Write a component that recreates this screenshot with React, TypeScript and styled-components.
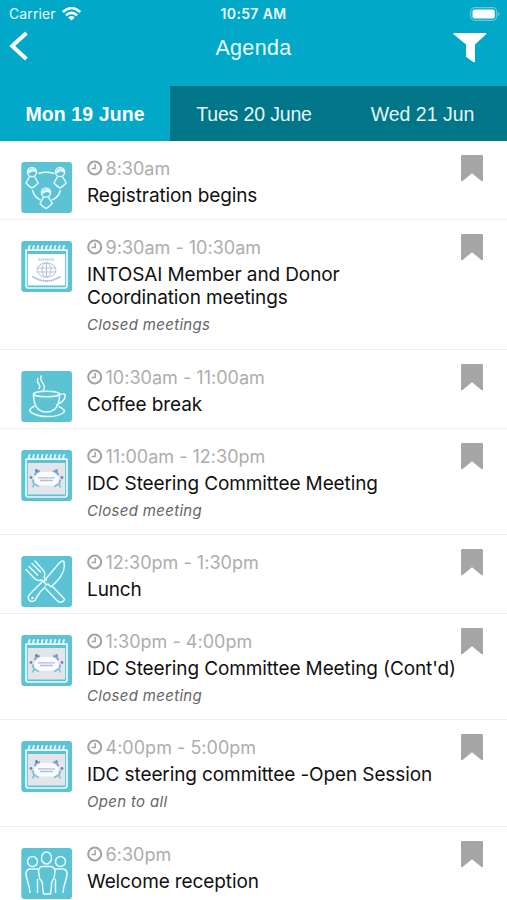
import React from 'react';
import styled, { createGlobalStyle } from 'styled-components';

const Global = createGlobalStyle`
  * { box-sizing: border-box; }
  body { margin: 0; background: #fff; overflow: hidden; }
`;

const Screen = styled.main`
  width: 507px;
  height: 900px;
  overflow: hidden;
  background: #fff;
  font-family: Inter, "Liberation Sans", sans-serif;
`;

const Header = styled.header`
  background: #02a8c7;
  color: #e9fbff;
`;

const StatusBar = styled.div`
  display: grid;
  grid-template-columns: 1fr auto 1fr;
  align-items: center;
  height: 28px;
  padding: 0 7px;
  font-size: 14px;
  line-height: 28px;
`;

const Carrier = styled.div`
  display: flex;
  align-items: center;
  gap: 6px;
  padding-left: 2px;
  letter-spacing: 0.1px;
`;

const Clock = styled.div`
  font-weight: 600;
  font-size: 14px;
  letter-spacing: 0.35px;
`;

const Battery = styled.div`
  display: flex;
  justify-content: flex-end;
`;

const NavBar = styled.div`
  display: grid;
  grid-template-columns: 1fr auto 1fr;
  height: 58px;
  padding: 0 9px;
  font: 21.5px/40px "Liberation Sans", sans-serif;
`;

const IconButton = styled.button<{ $end?: boolean }>`
  display: flex;
  align-items: flex-start;
  justify-self: ${(p) => (p.$end ? 'end' : 'start')};
  padding: 0 ${(p) => (p.$end ? 11 : 0)}px 0 0;
  border: 0;
  background: none;
  color: #fff;
`;

const Title = styled.h1`
  margin: 0;
  font: inherit;
  letter-spacing: 0.35px;
`;

const Tabs = styled.nav`
  display: grid;
  grid-template-columns: 170px 1fr 169px;
  height: 55px;
`;

const Tab = styled.button<{ $active?: boolean; $spacing?: number }>`
  height: 55px;
  border: 0;
  padding: 2px 0 0;
  background: ${(p) => (p.$active ? '#02a8c7' : '#007688')};
  color: ${(p) => (p.$active ? '#fff' : '#e4f6f8')};
  font: ${(p) => (p.$active ? 700 : 400)} 19.5px/53px "Liberation Sans", sans-serif;
  letter-spacing: ${(p) => p.$spacing ?? 0}px;
  white-space: nowrap;
`;

const List = styled.ul`
  margin: 0;
  padding: 0;
  list-style: none;
`;

const Row = styled.li<{ $height: number }>`
  display: grid;
  grid-template-columns: 66px 1fr;
  height: ${(p) => p.$height}px;
  padding: 14px 0 0 21px;
  border-bottom: 1px solid #efefef;
`;

const Thumb = styled.div`
  padding-top: 7px;
  height: 58px;
`;

const Details = styled.div`
  min-width: 0;
`;

const TimeLine = styled.div`
  display: flex;
  justify-content: space-between;
  height: 29px;
  padding-right: 24px;
`;

const Time = styled.div`
  display: flex;
  align-items: center;
  gap: 2.5px;
  height: 27px;
  color: #adadad;
  font-size: 18px;
  letter-spacing: 0.02px;
  white-space: nowrap;

  svg {
    margin-bottom: 1px;
  }
`;

const Name = styled.div`
  color: #111;
  font-size: 19px;
  line-height: 23px;
  letter-spacing: -0.11px;
  white-space: pre-line;
`;

const Note = styled.div`
  margin-top: 5px;
  color: #666;
  font-size: 15px;
  font-style: italic;
  line-height: 21px;
  letter-spacing: 0.32px;
`;

const WifiIcon = () => (
  <svg width="19" height="14" viewBox="0 0 19 14" fill="none" stroke="#f2fdff" strokeWidth="2.5">
    <path d="M.8 5Q9.5-3 18.2 5M3.9 8.3Q9.5 3.4 15.1 8.3" />
    <path d="M9.5 13.6 6.2 10.4Q9.5 7.8 12.8 10.4Z" fill="#fff" stroke="none" />
  </svg>
);

const BatteryIcon = () => (
  <svg width="30" height="14" viewBox="0 0 30 14">
    <rect x=".7" y=".7" width="26" height="12.6" rx="4" fill="none" stroke="#65cadd" strokeWidth="1.2" />
    <rect x="2.5" y="2.5" width="22.3" height="9" rx="2" fill="#fff" />
    <path d="M28 5v4Q29.6 8.4 29.6 7T28 5" fill="#65cadd" />
  </svg>
);

const BackIcon = () => (
  <svg width="20" height="34" viewBox="0 0 20 34" fill="none" stroke="#fff" strokeWidth="4">
    <path d="M17.4 5 3.2 18 17.4 31" />
  </svg>
);

const FilterIcon = () => (
  <svg width="34" height="36" viewBox="0 0 34 36" fill="#fff">
    <path d="M.8 5h32q1 .5 0 1.5L22 16.5v17.2q-.5 1-1.5.5L13 28.8V16.5L.8 6.5Q0 5.5.8 5Z" />
  </svg>
);

const ClockIcon = () => (
  <svg width="16" height="16" viewBox="0 0 16 16" fill="none" stroke="#a4a4a4">
    <circle cx="7.7" cy="8" r="6.5" strokeWidth="2.1" />
    <path d="M8.2 4v4.600H4.500" strokeWidth="1.5" />
  </svg>
);

const BookmarkIcon = () => (
  <svg width="22" height="27" viewBox="0 0 22 27" fill="#a6a6a6">
    <path d="M1.2 0h19.6Q22 0 22 1.2v24.3q-.4 1.3-1.6.5L11 18.2 1.6 26q-1.2.8-1.6-.5V1.2Q0 0 1.2 0Z" />
  </svg>
);

type IconKind = 'network' | 'globe' | 'coffee' | 'badge' | 'lunch' | 'people';

const NetworkArt = () => (
  <g strokeWidth="1.4">
    <path d="M17.500 11.500Q25 9 33 11.500M11.500 28q1.500 7 8 10M39.500 28Q38 35 31 38" />
    {[[11, 5.5], [39, 5.5], [25, 26]].map(([x, y]) => (
      <g key={x} transform={`translate(${x} ${y})`}>
        <circle cx="0" cy="4.5" r="4.600" />
        <path d="M-4 5Q-1-1 4 3.500M-3.500 5.500Q1 1.500 4 4.500M-2.400 9-6 15.500Q-3 19 0 20.500 3 19 6.200 15.500L2.500 9" />
      </g>
    ))}
  </g>
);

const CoffeeArt = () => (
  <g strokeWidth="1.5">
    <ellipse cx="25.5" cy="23" rx="13" ry="2.8" />
    <path d="M12.5 23q0 18 13 18t13-18M38 24q7-3 6 2t-9 8M13.5 35q-8 4-2.5 7 6 3.5 16 3.5t15-3.5q4-3-4.5-6.5" />
    <path d="M17 7q-1.500 3 .8 6t-.5 5M20.500 4.500q-2 3 1.200 7.500t.3 8" />
  </g>
);

const LunchArt = () => (
  <g strokeWidth="1.5" strokeLinecap="round" strokeLinejoin="round">
    <path d="m5 13.500 9 9.500q3.500 2.500 7 1l2 2M14 5l8 9q3 4 1 7.500l2.500 2.500M8 10.500l8.500 8.500M11 7.500l8.500 8.500" />
    <path d="M21 26 9 38q-3 3-.8 6t6 0q2-4 5-8l5-5" />
    <path d="M23 25 37 8.500q4-4.500 6-3 2 9-6 18.500l-7 7-3-3-2 1-2-4M25 33l11 11.500q2.500 2.500 5 1.500t2.500-3L31.500 30.500" />
    <circle cx="11.500" cy="42" r=".5" />
  </g>
);

const PeopleArt = () => (
  <g strokeWidth="1.5">
    <circle cx="11.5" cy="13.5" r="5" />
    <circle cx="39.5" cy="13.5" r="5" />
    <ellipse cx="25.5" cy="10" rx="5" ry="6" />
    <path d="M17 21H8.500q-4 1-3.500 6l2 8q1.500 4 2 10M34 21h8.500q4 1 3.500 6l-2 8q-1.500 4-2 10M16.500 31v14M34.500 31v14" />
    <path d="M21 18.500h9q4 1 4 5l-1 7q-3 3-2.500 8l-1 7.500h-7l-1-7.500q.5-5-3-8l-1-7q0-4 3.500-5Z" />
  </g>
);

const CalendarFrame = ({ fill }: { fill: string }) => (
  <g>
    <path d="M5 9V44.500Q5 47 7.500 47h36q2.500 0 2.500-2.500V9" strokeWidth="1.700" />
    <path d="M4.500 9.200h42" strokeWidth="1.700" />
    <rect x="6.800" y="13" width="37.400" height="31.500" fill={fill} stroke="none" />
    {Array.from({ length: 9 }, (_, i) => (
      <path key={i} d={`M${8 + i * 4.300} 9V6.300q0-1.300 1.400-1.300`} strokeWidth="1.800" />
    ))}
  </g>
);

const GlobeArt = () => (
  <g>
    <CalendarFrame fill="#fff" />
    <g stroke="#b3c1df" strokeWidth="1">
      <ellipse cx="25.500" cy="29" rx="9.500" ry="7.200" />
      <ellipse cx="25.500" cy="29" rx="4.500" ry="7.200" />
      <path d="M16.500 27h18M16.500 31h18M25.500 22v14" />
      <path d="M11.500 35.500q14 9 28 0" stroke="#a9b6e3" strokeWidth="1.800" strokeDasharray="1.500 .4" />
      <path d="M17.500 18.500h16" stroke="#bccbe0" strokeWidth="2.400" strokeDasharray="1.300 .7" />
    </g>
  </g>
);

const BadgeArt = () => (
  <g>
    <CalendarFrame fill="#e4e5e8" />
    <g fill="none" strokeWidth="1.900">
      <path d="m19 21-3.500 1-2 3M32 21l3.500 1 2 3" stroke="#78a6cc" />
      <path d="M11.500 29.500 13 34l5 2.500M39.500 29.500 38 34l-5 2.500" stroke="#87b7d9" />
      <path d="m13 34-1.500 3.500M38 34l1.500 3.500" stroke="#77d0dc" />
    </g>
    <path d="m17.500 23 2-1h12l2 1 4 4v5l-4 3.500h-16l-4-3.500v-5Z" fill="#f9fbff" stroke="none" />
    <g stroke="none">
      <circle cx="15.500" cy="20.500" r="1.500" fill="#5288b8" />
      <circle cx="35.500" cy="20.500" r="1.500" fill="#719cc6" />
      <circle cx="10" cy="27.500" r="1.400" fill="#5b91bf" />
      <circle cx="41" cy="27.500" r="1.400" fill="#5b91bf" />
    </g>
    <path d="M17 27.800h17M19 30.500h13" stroke="#a6b8c5" strokeWidth="1.300" strokeDasharray="1.800 .3" />
  </g>
);

const art: Record<IconKind, () => React.JSX.Element> = {
  network: NetworkArt,
  globe: GlobeArt,
  coffee: CoffeeArt,
  badge: BadgeArt,
  lunch: LunchArt,
  people: PeopleArt,
};

const SessionIcon = ({ kind }: { kind: IconKind }) => {
  const Art = art[kind];
  return (
    <svg width="51" height="51" viewBox="0 0 51 51" fill="none" stroke="#e9fcff" strokeLinejoin="round">
      <rect x=".3" width="50.700" height="51" rx="3" fill="#5bc3d4" stroke="none" />
      <Art />
    </svg>
  );
};

interface Session {
  icon: IconKind;
  time: string;
  name: string;
  note?: string;
  height: number;
}

const sessions: Session[] = [
  { icon: 'network', time: '8:30am', name: 'Registration begins', height: 79 },
  { icon: 'globe', time: '9:30am - 10:30am', name: 'INTOSAI Member and Donor\nCoordination meetings', note: 'Closed meetings', height: 130 },
  { icon: 'coffee', time: '10:30am - 11:00am', name: 'Coffee break', height: 79 },
  { icon: 'badge', time: '11:00am - 12:30pm', name: 'IDC Steering Committee Meeting', note: 'Closed meeting', height: 106 },
  { icon: 'lunch', time: '12:30pm - 1:30pm', name: 'Lunch', height: 79 },
  { icon: 'badge', time: '1:30pm - 4:00pm', name: "IDC Steering Committee Meeting (Cont'd)", note: 'Closed meeting', height: 106 },
  { icon: 'badge', time: '4:00pm - 5:00pm', name: 'IDC steering committee -Open Session', note: 'Open to all', height: 107 },
  { icon: 'people', time: '6:30pm', name: 'Welcome reception', height: 79 },
];

export default function App() {
  return (
    <Screen>
      <Global />
      <Header>
        <StatusBar>
          <Carrier>Carrier<WifiIcon /></Carrier>
          <Clock>10:57 AM</Clock>
          <Battery><BatteryIcon /></Battery>
        </StatusBar>
        <NavBar>
          <IconButton aria-label="Back"><BackIcon /></IconButton>
          <Title>Agenda</Title>
          <IconButton $end aria-label="Filter"><FilterIcon /></IconButton>
        </NavBar>
        <Tabs>
          <Tab $active $spacing={0.1}>Mon 19 June</Tab>
          <Tab $spacing={-0.15}>Tues 20 June</Tab>
          <Tab>Wed 21 Jun</Tab>
        </Tabs>
      </Header>
      <List>
        {sessions.map((s) => (
          <Row key={s.time} $height={s.height}>
            <Thumb><SessionIcon kind={s.icon} /></Thumb>
            <Details>
              <TimeLine>
                <Time><ClockIcon />{s.time}</Time>
                <BookmarkIcon />
              </TimeLine>
              <Name>{s.name}</Name>
              {s.note && <Note>{s.note}</Note>}
            </Details>
          </Row>
        ))}
      </List>
    </Screen>
  );
}
